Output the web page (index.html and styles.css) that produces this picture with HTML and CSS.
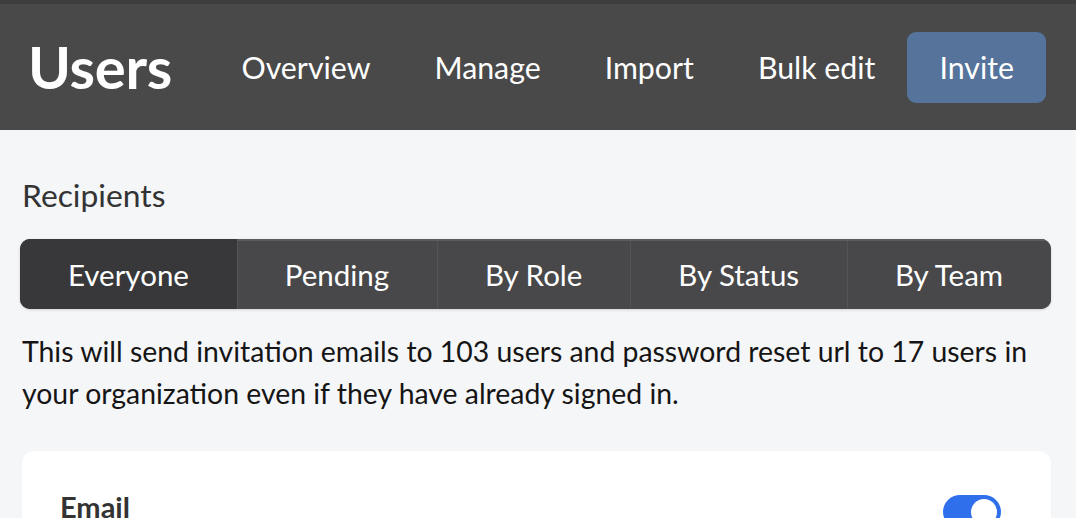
FILE: index.html
```html
<!DOCTYPE html>
<html lang="en">
<head>
<meta charset="utf-8">
<title>Users</title>
<link rel="stylesheet" href="styles.css">
</head>
<body>
<header class="topbar">
  <h1 class="brand">Users</h1>
  <nav class="nav">
    <a class="nav-item">Overview</a>
    <a class="nav-item">Manage</a>
    <a class="nav-item">Import</a>
    <a class="nav-item">Bulk edit</a>
    <a class="nav-item nav-primary">Invite</a>
  </nav>
</header>
<main class="content">
  <h2 class="section-title">Recipients</h2>
  <div class="segmented">
    <button class="seg seg-active">Everyone</button>
    <button class="seg">Pending</button>
    <button class="seg">By Role</button>
    <button class="seg">By Status</button>
    <button class="seg">By Team</button>
  </div>
  <p class="desc">This will send invitation emails to 103 users and password reset url to 17 users in your organization even if they have already signed in.</p>
  <section class="card">
    <div class="card-row">
      <span class="card-label">Email</span>
      <span class="switch"><span class="knob"></span></span>
    </div>
  </section>
</main>
</body>
</html>
```
FILE: styles.css
```css
* { box-sizing: border-box; }
html, body { margin: 0; padding: 0; }
body {
  background: #f5f6f8;
  font-family: Lato, "Noto Sans", sans-serif;
  color: #222;
  overflow: hidden;
}
.topbar {
  height: 130px;
  background: #494949;
  border-top: 4px solid #3e3e3e;
  display: flex;
  align-items: center;
  padding: 0 30px 0 28px;
}
.brand {
  margin: 0;
  font-size: 58px;
  font-weight: 700;
  color: #fff;
  line-height: 1;
  letter-spacing: -0.3px;
}
.nav {
  margin-left: auto;
  display: flex;
  align-items: center;
}
.nav-item {
  color: #fff;
  font-size: 30.3px;
  padding: 0 32px;
  line-height: 71px;
  height: 71px;
  border-radius: 9px;
}
.nav-primary {
  background: #55739b;
}
.content {
  padding: 0 25px 0 20px;
}
.section-title {
  margin: 0;
  padding: 45px 0 0 2px;
  font-size: 31.8px;
  font-weight: 400;
  color: #333;
  line-height: 40px;
}
.segmented {
  margin-top: 24px;
  height: 70px;
  display: flex;
  background: #48484a;
  border-radius: 10px;
  overflow: hidden;
  box-shadow: 0 1px 3px rgba(0,0,0,0.15);
}
.seg {
  flex: 1 1 auto;
  border: 0;
  background: #48484a;
  color: #fff;
  font-family: inherit;
  font-size: 29.5px;
  padding: 0 20px;
  box-shadow: inset 0 2px 0 #5c5c5e, inset 1px 0 0 #545456;
}
.seg-active {
  background: #38383a;
  box-shadow: none;
}
.desc {
  margin: 21px 0 0 2px;
  font-size: 28.4px;
  line-height: 42px;
  color: #151515;
}
.card {
  margin: 37px 0 0 2px;
  background: #fff;
  border-radius: 12px;
  padding: 38px 50px 30px 38px;
  box-shadow: 0 1px 2px rgba(0,0,0,0.04);
}
.card-row {
  display: flex;
  align-items: flex-start;
  justify-content: space-between;
}
.card-label {
  font-size: 29px;
  line-height: 36px;
  font-weight: 700;
  color: #333;
}
.switch {
  width: 58px;
  height: 34px;
  border-radius: 17px;
  background: #2f6fec;
  position: relative;
  margin-top: 6px;
}
.knob {
  position: absolute;
  right: 4px;
  top: 4px;
  width: 26px;
  height: 26px;
  border-radius: 50%;
  background: #fff;
}
```
